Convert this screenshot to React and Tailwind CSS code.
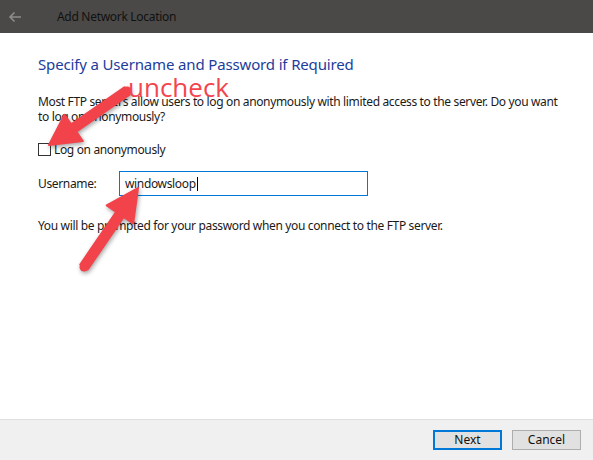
import React from "react";

function Arrow({ x1, y1, x2, y2, shaft = 8, headLen = 30, headW = 30 }) {
  const dx = x2 - x1, dy = y2 - y1;
  const L = Math.hypot(dx, dy);
  const ux = dx / L, uy = dy / L;
  const px = -uy, py = ux;
  const bx = x2 - ux * headLen, by = y2 - uy * headLen;
  const s = shaft / 2, h = headW / 2;
  const pts = [
    [x1 + px * s, y1 + py * s],
    [bx + px * s, by + py * s],
    [bx + px * h, by + py * h],
    [x2, y2],
    [bx - px * h, by - py * h],
    [bx - px * s, by - py * s],
    [x1 - px * s, y1 - py * s],
  ];
  return (
    <g>
      <polygon points={pts.map((p) => p.join(",")).join(" ")} fill="#f2434b" strokeLinejoin="round" stroke="#f2434b" strokeWidth="2" />
      <circle cx={x1} cy={y1} r={s} fill="#f2434b" />
    </g>
  );
}

export default function App() {
  return (
    <div className="relative w-[593px] h-[460px] flex flex-col bg-white overflow-hidden" style={{ fontFamily: '"Noto Sans", "Open Sans", sans-serif' }}>
      <div className="h-[33px] bg-[#4a4947] flex items-center shrink-0">
        <svg width="14" height="12" viewBox="0 0 14 12" className="ml-[8px]">
          <path d="M13 6H2M6.5 1.5L2 6l4.5 4.5" stroke="#8d8c8a" strokeWidth="1.6" fill="none" />
        </svg>
        <span className="ml-[35px] text-[12px] tracking-[-0.3px] text-[#111]">Add Network Location</span>
      </div>
      <div className="flex-1 pl-[38px] pt-[21px] text-[12px] tracking-[-0.35px] text-[#1a1a1a]">
        <div className="text-[15px] leading-[20px] tracking-[-0.15px] text-[#1c3d9c]">Specify a Username and Password if Required</div>
        <p className="mt-[20px] leading-[15px] w-[525px]">
          Most FTP servers allow users to log on anonymously with limited access to the server. Do you want to log on anonymously?
        </p>
        <div className="mt-[18px] flex items-center h-[15px]">
          <div className="w-[13px] h-[13px] border border-[#333] bg-white" />
          <span className="ml-[3px]">Log on anonymously</span>
        </div>
        <div className="mt-[14px] flex items-center">
          <span className="w-[81px]">Username:</span>
          <div className="w-[249px] h-[25px] border border-[#0078d7] flex items-center pl-[5px]">
            <span>windowsloop</span>
            <span className="w-px h-[14px] bg-black ml-px" />
          </div>
        </div>
        <p className="mt-[22px] leading-[15px]">You will be prompted for your password when you connect to the FTP server.</p>
      </div>
      <div className="h-[41px] shrink-0 bg-[#f0f0f0] border-t border-[#dfdfdf] flex items-start justify-end pt-[10px] pr-[12px] gap-[10px]">
        <button className="w-[69px] h-[20px] bg-[#e1e1e1] border-2 border-[#0078d7] text-[12px] text-[#111] leading-none">Next</button>
        <button className="w-[69px] h-[20px] bg-[#e1e1e1] border border-[#adadad] text-[12px] text-[#111] leading-none">Cancel</button>
      </div>

      <svg className="absolute left-0 top-0 pointer-events-none" width="593" height="460" style={{ filter: "drop-shadow(1px 2px 2px rgba(0,0,0,0.35))" }}>
        <Arrow x1={127} y1={91} x2={49} y2={145} shaft={9} headLen={30} headW={32} />
        <Arrow x1={84} y1={267} x2={138} y2={188} shaft={9} headLen={32} headW={32} />
      </svg>
      <div className="absolute left-[128px] top-[70px] text-[26px] leading-[34px] text-[#f4454f]" style={{ fontFamily: '"Open Sans", sans-serif' }}>uncheck</div>
    </div>
  );
}
